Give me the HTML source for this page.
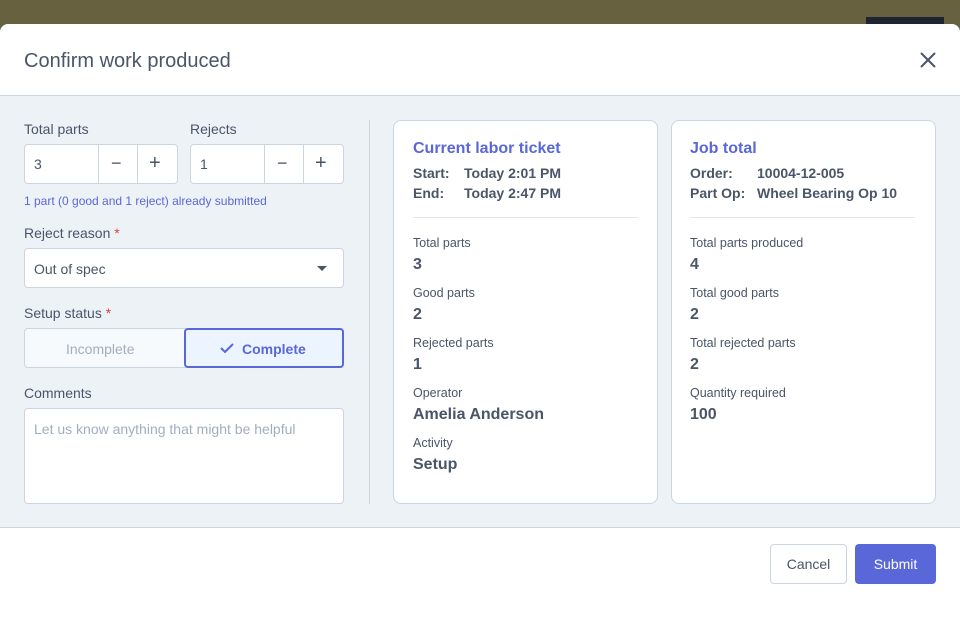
<!DOCTYPE html>
<html><head><meta charset="utf-8"><style>
*{box-sizing:border-box;margin:0;padding:0}
body{width:960px;height:600px;overflow:hidden;background:#676140;font-family:"Liberation Sans",sans-serif;color:#4a5568;position:relative}
.a{position:absolute}
.modal{left:0;top:24px;width:960px;height:600px;background:#fff;border-radius:8px 8px 0 0;overflow:hidden}
.lbl{font-size:14px;color:#4a5568;line-height:18px}
.req{color:#e53e3e}
.box{background:#fff;border:1px solid #cbd5e0;border-radius:4px}
.card{background:#fff;border:1px solid #cbd5e0;border-radius:8px}
.ct{font-size:16px;font-weight:bold;color:#5a67d8}
.row{font-size:14px;font-weight:bold;color:#4a5568;line-height:20px}
.sl{font-size:12.5px;color:#4a5568;line-height:16px}
.sv{font-size:16px;font-weight:bold;color:#4a5568;line-height:20px}
</style></head><body>
<div class="a" style="left:866px;top:17px;width:78px;height:20px;background:#1f2530"></div>
<div class="a modal">
 <div class="a" style="left:24px;top:26px;font-size:20px;color:#4a5568">Confirm work produced</div>
 <svg class="a" style="left:920px;top:28px" width="16" height="16" viewBox="0 0 16 16"><path d="M1 1L15 15M15 1L1 15" stroke="#4a5568" stroke-width="2"/></svg>
 <div class="a" style="left:0;top:71px;width:960px;height:433px;background:#edf2f7;border-top:1px solid #cbd5e0;border-bottom:1px solid #cbd5e0"></div>
</div>
<div class="a lbl" style="left:24px;top:120px">Total parts</div>
<div class="a lbl" style="left:190px;top:120px">Rejects</div>
<div class="a box" style="left:24px;top:144px;width:154px;height:40px"></div>
<div class="a" style="left:98px;top:145px;width:1px;height:38px;background:#cbd5e0"></div>
<div class="a" style="left:137px;top:145px;width:1px;height:38px;background:#cbd5e0"></div>
<div class="a" style="left:34px;top:156px;font-size:14px">3</div>
<div class="a" style="left:111px;top:153px;font-size:18px">−</div>
<div class="a" style="left:149px;top:152px;font-size:20px">+</div>
<div class="a box" style="left:190px;top:144px;width:154px;height:40px"></div>
<div class="a" style="left:264px;top:145px;width:1px;height:38px;background:#cbd5e0"></div>
<div class="a" style="left:303px;top:145px;width:1px;height:38px;background:#cbd5e0"></div>
<div class="a" style="left:200px;top:156px;font-size:14px">1</div>
<div class="a" style="left:277px;top:153px;font-size:18px">−</div>
<div class="a" style="left:315px;top:152px;font-size:20px">+</div>
<div class="a" style="left:24px;top:194px;font-size:12px;color:#5a67d8">1 part (0 good and 1 reject) already submitted</div>
<div class="a lbl" style="left:24px;top:224px">Reject reason <span class="req">*</span></div>
<div class="a box" style="left:24px;top:248px;width:320px;height:40px"></div>
<div class="a" style="left:34px;top:261px;font-size:14px">Out of spec</div>
<div class="a" style="left:317px;top:266px;width:0;height:0;border-left:5px solid transparent;border-right:5px solid transparent;border-top:5px solid #4a5568"></div>
<div class="a lbl" style="left:24px;top:304px">Setup status <span class="req">*</span></div>
<div class="a" style="left:24px;top:328px;width:162px;height:40px;background:#f7fafc;border:1px solid #cbd5e0;border-radius:4px 0 0 4px"></div>
<div class="a" style="left:66px;top:341px;font-size:14px;color:#a0aec0">Incomplete</div>
<div class="a" style="left:184px;top:328px;width:160px;height:40px;background:#ebf4ff;border:2px solid #5a67d8;border-radius:4px"></div>
<svg class="a" style="left:219px;top:341px" width="16" height="14" viewBox="0 0 16 14"><path d="M2 7L6 11L14 3" fill="none" stroke="#5a67d8" stroke-width="2"/></svg>
<div class="a" style="left:242px;top:341px;font-size:14px;font-weight:bold;color:#5a67d8">Complete</div>
<div class="a lbl" style="left:24px;top:384px">Comments</div>
<div class="a box" style="left:24px;top:408px;width:320px;height:96px"></div>
<div class="a" style="left:34px;top:421px;font-size:14px;color:#a0aec0">Let us know anything that might be helpful</div>
<div class="a" style="left:369px;top:120px;width:1px;height:384px;background:#cbd5e0"></div>

<div class="a card" style="left:393px;top:120px;width:265px;height:384px"></div>
<div class="a ct" style="left:413px;top:140px">Current labor ticket</div>
<div class="a row" style="left:413px;top:163px">Start:</div><div class="a row" style="left:464px;top:163px">Today 2:01 PM</div>
<div class="a row" style="left:413px;top:183px">End:</div><div class="a row" style="left:464px;top:183px">Today 2:47 PM</div>
<div class="a" style="left:413px;top:217px;width:225px;height:1px;background:#e2e8f0"></div>
<div class="a sl" style="left:413px;top:235px">Total parts</div><div class="a sv" style="left:413px;top:255px">3</div>
<div class="a sl" style="left:413px;top:285px">Good parts</div><div class="a sv" style="left:413px;top:305px">2</div>
<div class="a sl" style="left:413px;top:335px">Rejected parts</div><div class="a sv" style="left:413px;top:355px">1</div>
<div class="a sl" style="left:413px;top:385px">Operator</div><div class="a sv" style="left:413px;top:405px">Amelia Anderson</div>
<div class="a sl" style="left:413px;top:435px">Activity</div><div class="a sv" style="left:413px;top:455px">Setup</div>

<div class="a card" style="left:671px;top:120px;width:265px;height:384px"></div>
<div class="a ct" style="left:690px;top:140px">Job total</div>
<div class="a row" style="left:690px;top:163px">Order:</div><div class="a row" style="left:757px;top:163px">10004-12-005</div>
<div class="a row" style="left:690px;top:183px">Part Op:</div><div class="a row" style="left:757px;top:183px">Wheel Bearing Op 10</div>
<div class="a" style="left:690px;top:217px;width:225px;height:1px;background:#e2e8f0"></div>
<div class="a sl" style="left:690px;top:235px">Total parts produced</div><div class="a sv" style="left:690px;top:255px">4</div>
<div class="a sl" style="left:690px;top:285px">Total good parts</div><div class="a sv" style="left:690px;top:305px">2</div>
<div class="a sl" style="left:690px;top:335px">Total rejected parts</div><div class="a sv" style="left:690px;top:355px">2</div>
<div class="a sl" style="left:690px;top:385px">Quantity required</div><div class="a sv" style="left:690px;top:405px">100</div>

<div class="a" style="left:770px;top:544px;width:77px;height:40px;border:1px solid #cbd5e0;border-radius:4px;background:#fff;font-size:14px;text-align:center;line-height:38px;color:#4a5568">Cancel</div>
<div class="a" style="left:855px;top:544px;width:81px;height:40px;border-radius:4px;background:#5a67d8;font-size:14px;text-align:center;line-height:40px;color:#fff">Submit</div>
</body></html>
